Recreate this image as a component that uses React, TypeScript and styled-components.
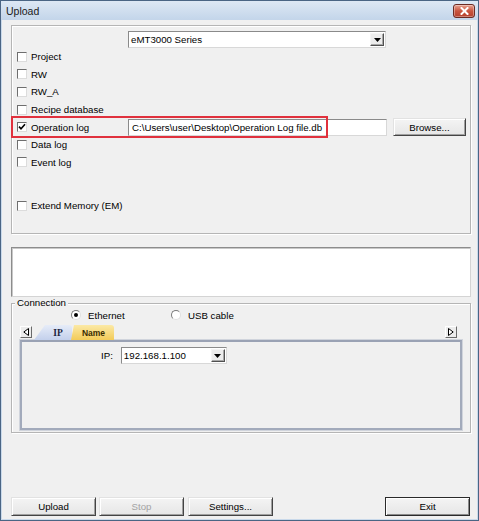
import React from "react";
import styled, { createGlobalStyle, css } from "styled-components";

const Global = createGlobalStyle`
  html, body { margin: 0; padding: 0; background: #ffffff; }
  body { font-family: "Liberation Sans", Arial, sans-serif; }
  *, *::before, *::after { box-sizing: border-box; }
`;

const Window = styled.div`
  width: 479px;
  height: 521px;
  display: flex;
  flex-direction: column;
  border: 1px solid #4a6584;
  background: #c9d9ea;
  font-family: "Liberation Sans", Arial, sans-serif;
  font-size: 9.7px;
  color: #000;
`;

const TitleBar = styled.div`
  height: 19px;
  display: flex;
  align-items: center;
  padding: 0 3px 0 5px;
  background: linear-gradient(#dde8f4, #c3d5ea);
  font-size: 10.5px;
  color: #1a1a1a;
`;

const Title = styled.span`
  flex: 1;
`;

const CloseButton = styled.div`
  width: 22px;
  height: 14px;
  border: 1px solid #6b2b24;
  border-radius: 3px;
  background: linear-gradient(#e9a392, #c9553f 50%, #b5402c);
  box-shadow: inset 0 0 0 1px rgba(255, 255, 255, 0.35);
  display: flex;
  align-items: center;
  justify-content: center;
`;

const Client = styled.div`
  flex: 1;
  margin: 0 1px 1px 1px;
  background: #f0f0f0;
  display: flex;
  flex-direction: column;
  padding: 5px 6px 3px 9px;
`;

const GroupBox = styled.div<{ $h: number }>`
  height: ${(p) => p.$h}px;
  border: 1px solid #b5b5b5;
  box-shadow: 1px 1px 0 #ffffff, inset 1px 1px 0 #ffffff;
  display: flex;
  flex-direction: column;
`;

const TopGroup = styled(GroupBox)`
  padding-top: 5px;
`;

const ComboRow = styled.div`
  padding-left: 116px;
`;

const sunken = css`
  border: 1px solid;
  border-color: #8a8a8a #d8d8d8 #d8d8d8 #8a8a8a;
  background: #ffffff;
`;

const Combo = styled.div<{ $w: number }>`
  ${sunken};
  width: ${(p) => p.$w}px;
  height: 17px;
  display: flex;
  align-items: center;
  padding: 0 1px 0 2px;
`;

const ComboText = styled.span`
  flex: 1;
  white-space: nowrap;
`;

const ArrowButton = styled.div`
  width: 14px;
  height: 13px;
  border: 1px solid;
  border-color: #f4f4f4 #505050 #505050 #f4f4f4;
  box-shadow: inset -1px -1px 0 #a8a8a8;
  background: #ececec;
  display: flex;
  align-items: center;
  justify-content: center;
`;

const CheckRow = styled.div<{ $gap?: number }>`
  position: relative;
  height: 17.6px;
  display: flex;
  align-items: center;
  padding-left: 5px;
  margin-top: ${(p) => p.$gap ?? 0}px;
`;

const CheckCell = styled.div`
  width: 111px;
  display: flex;
  align-items: center;
`;

const Box = styled.div`
  width: 10px;
  height: 10px;
  flex: none;
  border: 1px solid;
  border-color: #6e6e6e #dcdcdc #dcdcdc #6e6e6e;
  background: #ffffff;
  display: flex;
  align-items: center;
  justify-content: center;
  margin-right: 4px;
`;

const Label = styled.span`
  white-space: nowrap;
`;

const PathInput = styled.div`
  ${sunken};
  width: 259px;
  height: 17px;
  display: flex;
  align-items: center;
  padding-left: 3px;
  white-space: nowrap;
`;

const buttonFace = css`
  border: 1px solid;
  border-color: #e2e2e2 #444444 #444444 #e2e2e2;
  box-shadow: inset 1px 1px 0 #ffffff, inset -1px -1px 0 #a0a0a0;
  background: linear-gradient(#f4f4f4, #e6e6e6);
  display: flex;
  align-items: center;
  justify-content: center;
  white-space: nowrap;
`;

const BrowseButton = styled.div`
  ${buttonFace};
  width: 73px;
  height: 18px;
  margin-left: 6px;
`;

const Highlight = styled.div`
  position: absolute;
  left: -1px;
  top: -2px;
  width: 317px;
  height: 22px;
  border: 2px solid #e0313d;
  pointer-events: none;
`;

const LogBox = styled.div`
  margin-top: 13px;
  height: 50px;
  background: #ffffff;
  border: 1px solid;
  border-color: #8c8c8c #d4d4d4 #d4d4d4 #8c8c8c;
  box-shadow: inset 1px 1px 0 #c8c8c8;
`;

const ConnGroup = styled(GroupBox)`
  margin-top: 6px;
  padding: 0 8px 2px 8px;
`;

const Legend = styled.span`
  align-self: flex-start;
  margin: -7px 0 0 -5px;
  padding: 0 2px;
  line-height: 12px;
  background: #f0f0f0;
`;

const RadioRow = styled.div`
  height: 12px;
  display: flex;
  align-items: center;
  padding-left: 51px;
`;

const RadioOption = styled.div`
  width: 100px;
  display: flex;
  align-items: center;
  gap: 7px;
`;

const RadioCircle = styled.div`
  width: 10px;
  height: 10px;
  border-radius: 50%;
  border: 1px solid;
  border-color: #7a7a7a #e0e0e0 #e0e0e0 #7a7a7a;
  background: #ffffff;
  display: flex;
  align-items: center;
  justify-content: center;
`;

const RadioDot = styled.div`
  width: 4px;
  height: 4px;
  border-radius: 50%;
  background: #000;
`;

const TabStrip = styled.div`
  margin-top: 4px;
  height: 15px;
  display: flex;
  align-items: flex-end;
`;

const ScrollButton = styled.div<{ $right?: boolean }>`
  width: 12px;
  height: 12px;
  margin-bottom: 2px;
  ${(p) => (p.$right ? "margin-left: auto; margin-right: 5px;" : "")}
  border: 1px solid;
  border-color: #ffffff #6a6a6a #6a6a6a #ffffff;
  background: #ececec;
  display: flex;
  align-items: center;
  justify-content: center;
`;

const Tab = styled.div<{ $kind: "blue" | "yellow" }>`
  height: 15px;
  display: flex;
  align-items: center;
  justify-content: center;
  font-weight: bold;
  font-size: 8.5px;
  border-top-right-radius: 3px;
  ${(p) =>
    p.$kind === "blue"
      ? css`
          width: 38px;
          margin-left: 2px;
          padding-left: 10px;
          background: linear-gradient(#e6ecf8, #c3d0ec);
          clip-path: polygon(0 100%, 11px 0, 100% 0, 100% 100%);
          font-family: "Liberation Serif", "Times New Roman", serif;
          font-size: 9.5px;
          color: #1d2440;
        `
      : css`
          width: 43px;
          margin-left: -1px;
          padding-left: 2px;
          background: linear-gradient(#fbe9a6, #f3cb58);
          clip-path: polygon(0 100%, 3px 0, 100% 0, 100% 100%);
          color: #3b2c00;
        `}
`;

const TabPanel = styled.div`
  height: 90px;
  border: 2px solid #a2aabb;
  border-top-color: #9aa2b4;
  box-shadow: 0 0 0 1px #d0d4dc;
  padding: 5px 0 0 79px;
`;

const IpRow = styled.div`
  display: flex;
  align-items: center;
  gap: 8px;
`;

const ButtonRow = styled.div`
  margin-top: auto;
  height: 19px;
  display: flex;
  padding-right: 1px;
`;

const DlgButton = styled.div<{ $gap?: number; $disabled?: boolean; $default?: boolean; $push?: boolean }>`
  ${buttonFace};
  width: 85px;
  height: 19px;
  margin-left: ${(p) => (p.$push ? "auto" : `${p.$gap ?? 0}px`)};
  color: ${(p) => (p.$disabled ? "#a3a3a3" : "#000")};
  ${(p) =>
    p.$default &&
    css`
      border-color: #2a2a2a;
      box-shadow: inset 1px 1px 0 #ffffff, inset -1px -1px 0 #8a8a8a;
    `}
`;

const DownArrow = () => (
  <svg width="7" height="4" viewBox="0 0 7 4">
    <polygon points="0,0 7,0 3.5,4" fill="#000" />
  </svg>
);

const Check = () => (
  <svg width="8" height="8" viewBox="0 0 8 8">
    <polyline points="1,3.6 3,5.8 7,1.2" fill="none" stroke="#000" strokeWidth="1.6" />
  </svg>
);

const Tri = ({ dir }: { dir: "left" | "right" }) => (
  <svg width="6" height="8" viewBox="0 0 6 8">
    {dir === "left" ? (
      <polygon points="5.5,0.5 0.8,4 5.5,7.5" fill="#fff" stroke="#000" strokeWidth="1" />
    ) : (
      <polygon points="0.5,0.5 5.2,4 0.5,7.5" fill="#fff" stroke="#000" strokeWidth="1" />
    )}
  </svg>
);

type Item = { label: string; checked?: boolean; path?: string; gap?: number };

const items: Item[] = [
  { label: "Project" },
  { label: "RW" },
  { label: "RW_A" },
  { label: "Recipe database" },
  { label: "Operation log", checked: true, path: "C:\\Users\\user\\Desktop\\Operation Log file.db" },
  { label: "Data log" },
  { label: "Event log" },
  { label: "Extend Memory (EM)", gap: 26 },
];

export default function App() {
  return (
    <>
      <Global />
      <Window>
        <TitleBar>
          <Title>Upload</Title>
          <CloseButton>
            <svg width="9" height="8" viewBox="0 0 9 8">
              <path d="M1.5 1 L7.5 7 M7.5 1 L1.5 7" stroke="#fff" strokeWidth="2" strokeLinecap="square" />
            </svg>
          </CloseButton>
        </TitleBar>
        <Client>
          <TopGroup $h={209}>
            <ComboRow>
              <Combo $w={258}>
                <ComboText>eMT3000 Series</ComboText>
                <ArrowButton>
                  <DownArrow />
                </ArrowButton>
              </Combo>
            </ComboRow>
            {items.map((it) => (
              <CheckRow key={it.label} $gap={it.gap}>
                <CheckCell>
                  <Box>{it.checked && <Check />}</Box>
                  <Label>{it.label}</Label>
                </CheckCell>
                {it.path && (
                  <>
                    <PathInput>{it.path}</PathInput>
                    <BrowseButton>Browse...</BrowseButton>
                    <Highlight />
                  </>
                )}
              </CheckRow>
            ))}
          </TopGroup>
          <LogBox />
          <ConnGroup $h={130}>
            <Legend>Connection</Legend>
            <RadioRow>
              <RadioOption>
                <RadioCircle>
                  <RadioDot />
                </RadioCircle>
                <Label>Ethernet</Label>
              </RadioOption>
              <RadioOption>
                <RadioCircle />
                <Label>USB cable</Label>
              </RadioOption>
            </RadioRow>
            <TabStrip>
              <ScrollButton>
                <Tri dir="left" />
              </ScrollButton>
              <Tab $kind="blue">IP</Tab>
              <Tab $kind="yellow">Name</Tab>
              <ScrollButton $right>
                <Tri dir="right" />
              </ScrollButton>
            </TabStrip>
            <TabPanel>
              <IpRow>
                <Label>IP:</Label>
                <Combo $w={106}>
                  <ComboText>192.168.1.100</ComboText>
                  <ArrowButton>
                    <DownArrow />
                  </ArrowButton>
                </Combo>
              </IpRow>
            </TabPanel>
          </ConnGroup>
          <ButtonRow>
            <DlgButton>Upload</DlgButton>
            <DlgButton $gap={3} $disabled>
              Stop
            </DlgButton>
            <DlgButton $gap={4}>Settings...</DlgButton>
            <DlgButton $push $default>
              Exit
            </DlgButton>
          </ButtonRow>
        </Client>
      </Window>
    </>
  );
}
